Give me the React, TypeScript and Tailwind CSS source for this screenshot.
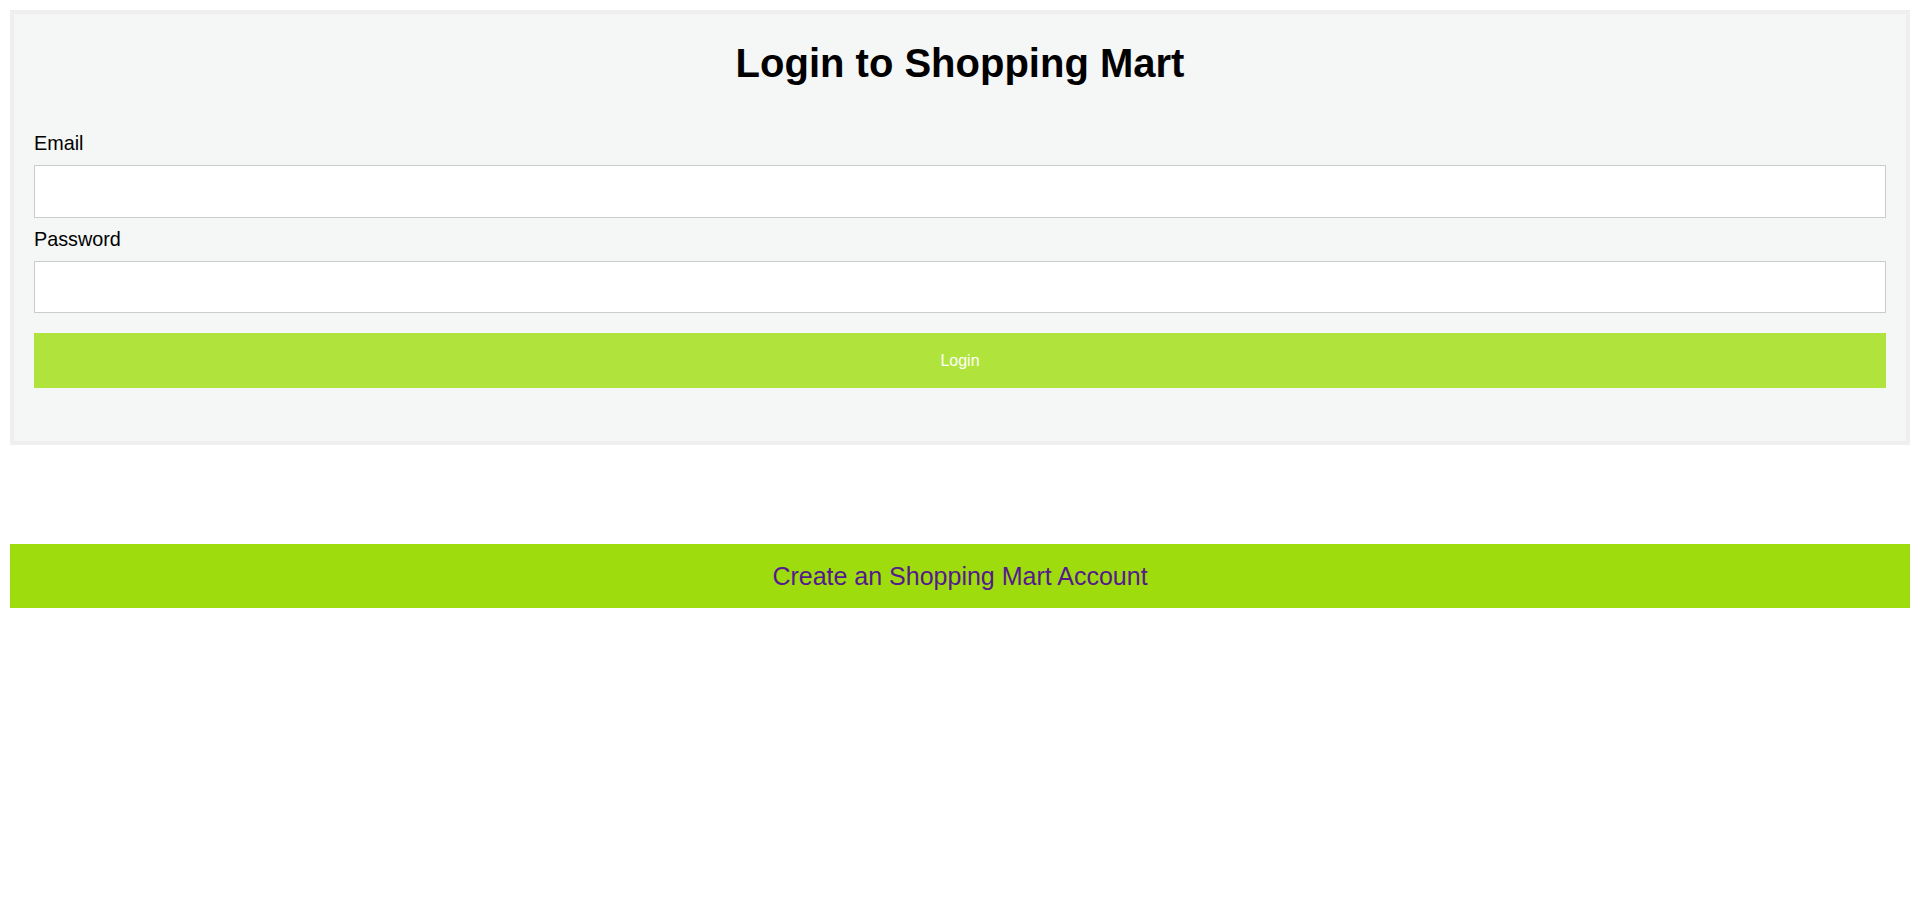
export default function App() {
  return (
    <div className="min-h-screen bg-white p-[10px] font-['Liberation_Sans',Arial,sans-serif] text-black">
      {/* Login card */}
      <div className="border-4 border-[#efefef] bg-[#f5f6f6] px-5 pt-[26px] pb-[53px]">
        <h1 className="text-center text-[40px] font-bold leading-[46px]">
          Login to Shopping Mart
        </h1>

        <form className="mt-[46px] flex flex-col" onSubmit={(e) => e.preventDefault()}>
          <label htmlFor="email" className="text-[19.8px] leading-[23px]">
            Email
          </label>
          <input
            id="email"
            type="email"
            className="mt-[10px] h-[53px] w-full border border-[#cccccc] bg-white px-3 outline-none"
          />

          <label htmlFor="password" className="mt-[10px] text-[19.8px] leading-[23px]">
            Password
          </label>
          <input
            id="password"
            type="password"
            className="mt-[10px] h-[52px] w-full border border-[#cccccc] bg-white px-3 outline-none"
          />

          <button
            type="submit"
            className="mt-5 h-[55px] w-full bg-[#b1e33d] text-[16px] text-white"
          >
            Login
          </button>
        </form>
      </div>

      {/* Register link */}
      <a
        href="#"
        className="mt-[99px] flex h-[64px] items-center justify-center bg-[#9fdc0e] pt-[2px] text-[25px] text-[#551a8b]"
      >
        Create an Shopping Mart Account
      </a>
    </div>
  );
}
